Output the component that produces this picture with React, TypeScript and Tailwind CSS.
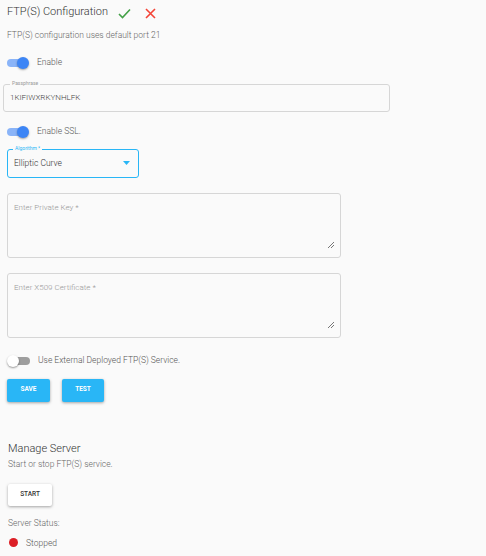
import { FC } from "react";

const Toggle: FC<{ on: boolean }> = ({ on }) => (
  <div className="relative w-[24px] h-[14px] flex items-center">
    <div
      className={
        on
          ? "w-[20px] h-[8px] rounded-full bg-[#8ab4f8] ml-[1px]"
          : "w-[20px] h-[8px] rounded-full bg-[#9e9e9e] ml-[3px]"
      }
    />
    <div
      className={
        on
          ? "absolute left-[11px] top-[1px] w-[12px] h-[12px] rounded-full bg-[#3d85f5] shadow-[0_1px_2px_rgba(0,0,0,0.35)]"
          : "absolute left-0 top-[1px] w-[12px] h-[12px] rounded-full bg-white shadow-[0_1px_2px_rgba(0,0,0,0.4)]"
      }
    />
  </div>
);

const ResizeHandle: FC = () => (
  <svg width="8" height="8" viewBox="0 0 8 8" className="absolute right-[5px] bottom-[8px]">
    <path d="M1 7 L7 1 M4 7 L7 4" stroke="#555" strokeWidth="0.8" />
  </svg>
);

const App: FC = () => {
  return (
    <div
      className="w-[486px] h-[556px] bg-[#fafafa] text-[#6b6b6b] overflow-hidden"
      style={{ fontFamily: "Roboto, 'Noto Sans', sans-serif" }}
    >
      {/* Header */}
      <div className="flex items-center pl-[7px] pt-[3px] h-[20px]">
        <h2 className="text-[11px] font-light text-[#333] leading-none">FTP(S) Configuration</h2>
        <svg width="13" height="11" viewBox="0 0 13 11" className="ml-[10px] mt-[3px]">
          <path d="M1 6 L4.5 9.5 L12 1.5" stroke="#43a047" strokeWidth="1.6" fill="none" />
        </svg>
        <svg width="11" height="11" viewBox="0 0 11 11" className="ml-[14px] mt-[3px]">
          <path d="M1 1 L10 10 M10 1 L1 10" stroke="#f44336" strokeWidth="1.6" fill="none" />
        </svg>
      </div>
      <p className="pl-[7px] mt-[11px] text-[8.5px] font-light leading-none text-[#666]">
        FTP(S) configuration uses default port 21
      </p>

      {/* Enable */}
      <div className="flex items-center gap-[7px] pl-[6px] mt-[16px]">
        <Toggle on />
        <span className="text-[8.5px] font-light text-[#555]">Enable</span>
      </div>

      {/* Passphrase */}
      <div className="relative ml-[3px] mt-[14px] w-[387px] h-[28px] border border-[#d6d6d6] rounded-[3px]">
        <span className="absolute -top-[4px] left-[6px] px-[2px] bg-[#fafafa] text-[5px] leading-none text-[#999]">
          Passphrase
        </span>
        <div className="pl-[6px] pt-[9px] text-[8px] font-light text-[#444] leading-none">1KIFIWXRKYNHLFK</div>
      </div>

      {/* Enable SSL */}
      <div className="flex items-center gap-[7px] pl-[6px] mt-[13px]">
        <Toggle on />
        <span className="text-[8.5px] font-light text-[#555]">Enable SSL.</span>
      </div>

      {/* Algorithm */}
      <div className="relative ml-[7px] mt-[10px] w-[132px] h-[29px] border-[1.5px] border-[#29b6f6] rounded-[3px]">
        <span className="absolute -top-[4px] left-[5px] px-[2px] bg-[#fafafa] text-[5px] leading-none text-[#29b6f6]">
          Algorithm *
        </span>
        <div className="flex items-center justify-between pl-[6px] pr-[8px] h-full">
          <span className="text-[8.5px] font-light text-[#333]">Elliptic Curve</span>
          <svg width="7" height="4" viewBox="0 0 7 4">
            <path d="M0 0 L7 0 L3.5 4 Z" fill="#29b6f6" />
          </svg>
        </div>
      </div>

      {/* Private key */}
      <div className="relative ml-[7px] mt-[15px] w-[334px] h-[65px] border border-[#d6d6d6] rounded-[3px]">
        <div className="pl-[6px] pt-[10px] text-[8px] font-light text-[#999] leading-none">Enter Private Key *</div>
        <ResizeHandle />
      </div>

      {/* X509 */}
      <div className="relative ml-[7px] mt-[15px] w-[334px] h-[65px] border border-[#d6d6d6] rounded-[3px]">
        <div className="pl-[6px] pt-[10px] text-[8px] font-light text-[#999] leading-none">Enter X509 Certificate *</div>
        <ResizeHandle />
      </div>

      {/* External */}
      <div className="flex items-center gap-[7px] pl-[7px] mt-[16px]">
        <Toggle on={false} />
        <span className="text-[8.5px] font-light text-[#555]">Use External Deployed FTP(S) Service.</span>
      </div>

      {/* Buttons */}
      <div className="flex gap-[12px] pl-[7px] mt-[11px]">
        <button className="w-[43px] h-[23px] rounded-[2px] bg-[#29b6f6] text-white text-[6.5px] font-bold shadow-[0_1px_3px_rgba(0,0,0,0.35)]">
          SAVE
        </button>
        <button className="w-[42px] h-[23px] rounded-[2px] bg-[#29b6f6] text-white text-[6.5px] font-bold shadow-[0_1px_3px_rgba(0,0,0,0.35)]">
          TEST
        </button>
      </div>

      {/* Manage server */}
      <h3 className="pl-[8px] mt-[41px] text-[11px] font-light text-[#333] leading-none">Manage Server</h3>
      <p className="pl-[8px] mt-[6px] text-[8.5px] font-light text-[#666] leading-none">Start or stop FTP(S) service.</p>
      <button className="ml-[8px] mt-[16px] w-[44px] h-[22px] rounded-[2px] bg-white text-[#333] text-[6.5px] font-medium shadow-[0_1px_3px_rgba(0,0,0,0.35)]">
        START
      </button>
      <p className="pl-[8px] mt-[13px] text-[8.5px] font-light text-[#666] leading-none">Server Status:</p>
      <div className="flex items-center gap-[8px] pl-[9px] mt-[9px]">
        <div className="w-[9px] h-[9px] rounded-full bg-[#dc1f26]" />
        <span className="text-[8.5px] font-light text-[#555]">Stopped</span>
      </div>
    </div>
  );
};

export default App;
